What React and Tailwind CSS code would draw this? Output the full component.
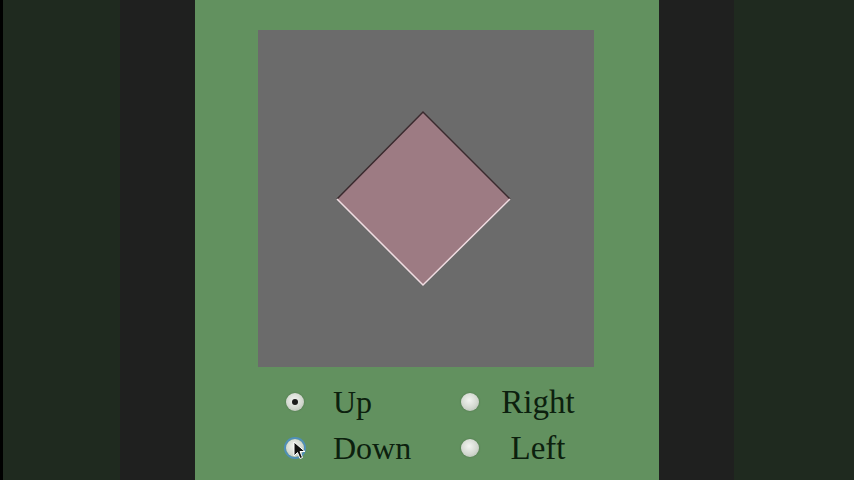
import React from 'react';

const Radio = ({ checked, focused }) => (
  <div
    className={`w-[18px] h-[18px] rounded-full flex items-center justify-center bg-[radial-gradient(circle_at_45%_40%,#f2f4f0_0%,#d3d8d0_55%,#a9b3a6_100%)] ${
      focused ? 'ring-2 ring-[#4f8fb8]' : 'shadow-[0_0_2px_rgba(0,0,0,0.25)]'
    }`}
  >
    {checked && <div className="w-[6px] h-[6px] rounded-full bg-[#1c1c1c]" />}
  </div>
);

const Option = ({ label, checked, focused, labelClass }) => (
  <div className="flex items-center">
    <div className="relative">
      <Radio checked={checked} focused={focused} />
      {focused && (
        <svg className="absolute left-[7px] top-[2px]" width="14" height="20" viewBox="0 0 14 20">
          <path d="M1 1 L1 15 L4.5 11.5 L7 17.5 L9.5 16.5 L7 10.5 L12 10.5 Z" fill="#111" stroke="#fff" strokeWidth="1" />
        </svg>
      )}
    </div>
    <span className={`text-[32px] leading-none text-[#0c200e] ${labelClass}`}>{label}</span>
  </div>
);

export default function App() {
  return (
    <div className="w-[854px] h-[480px] flex overflow-hidden bg-black" style={{ fontFamily: '"Liberation Serif", serif' }}>
      <div className="w-[3px] bg-black" />
      <div className="w-[117px] bg-[#1f2a1f]" />
      <div className="w-[75px] bg-[#1f201f]" />

      {/* Main panel */}
      <div className="w-[464px] bg-[#62915f] flex flex-col">
        <div className="ml-[63px] mt-[30px] w-[336px] h-[337px] bg-[#6b6b6b] flex items-center justify-center">
          <svg width="336" height="337" viewBox="0 0 336 337">
            <polygon points="165,82 252,169 165,255 79,169" fill="#9d7b83" />
            <polyline points="79,169 165,82 252,169" fill="none" stroke="#3a2a2e" strokeWidth="1.5" />
            <polyline points="79,169 165,255 252,169" fill="none" stroke="#f0dde2" strokeWidth="1.5" />
          </svg>
        </div>

        <div className="mt-[12px] pl-[91px] flex flex-col">
          <div className="h-[46px] flex items-center">
            <div className="w-[175px]">
              <Option label="Up" checked labelClass="ml-[29px]" />
            </div>
            <div className="flex items-center">
              <Radio />
              <span className="w-[102px] ml-[8px] text-center text-[33px] leading-none text-[#0c200e] whitespace-nowrap">Right</span>
            </div>
          </div>
          <div className="h-[46px] flex items-center">
            <div className="w-[175px]">
              <Option label="Down" focused labelClass="ml-[29px]" />
            </div>
            <div className="flex items-center">
              <Radio />
              <span className="w-[102px] ml-[8px] text-center text-[33px] leading-none text-[#0c200e] whitespace-nowrap">Left</span>
            </div>
          </div>
        </div>
      </div>

      <div className="w-[75px] bg-[#1f201f]" />
      <div className="flex-1 bg-[#1f2a1f]" />
    </div>
  );
}
